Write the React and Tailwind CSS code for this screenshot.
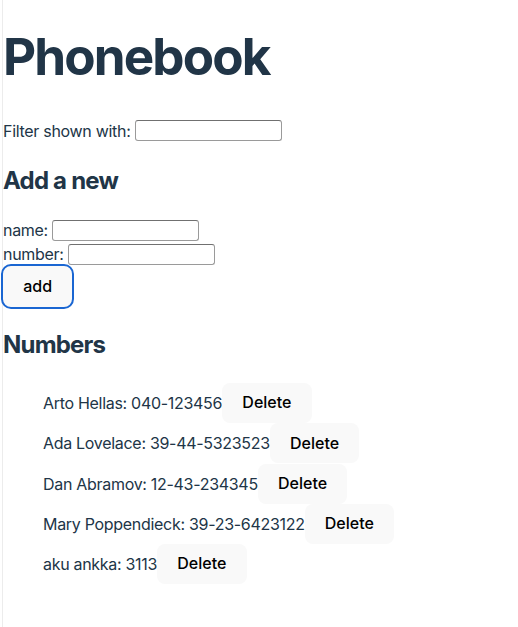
import React from "react";

const persons = [
  { name: "Arto Hellas", number: "040-123456" },
  { name: "Ada Lovelace", number: "39-44-5323523" },
  { name: "Dan Abramov", number: "12-43-234345" },
  { name: "Mary Poppendieck", number: "39-23-6423122" },
  { name: "aku ankka", number: "3113" },
];

function Field() {
  return (
    <input
      type="text"
      className="box-border h-[21px] w-[147px] rounded-[3px] border border-[#9a9a9a] border-t-[#707070] bg-white px-[2px] text-[13.33px] outline-none"
    />
  );
}

export default function App() {
  return (
    <div
      className="ml-[2px] min-h-[627px] border-l border-[#ececec] bg-white pt-[28px] text-[16px] leading-6 tracking-[-0.3px] text-[#213547] antialiased"
      style={{ fontFamily: "Inter, 'Noto Sans', sans-serif" }}
    >
      <h1 className="mb-[34.3px] text-[51.2px] font-bold leading-[1.1] tracking-[-1.9px]">Phonebook</h1>
      <div className="flex h-6 items-center gap-[4px]">
        <span>Filter shown with:</span>
        <Field />
      </div>
      <h2 className="mt-[19.92px] mb-[19.92px] text-[24px] font-bold leading-9 tracking-[-0.8px]">Add a new</h2>
      <form onSubmit={(e) => e.preventDefault()}>
        <div className="flex h-6 items-center gap-[4px]">
          <span>name:</span>
          <Field />
        </div>
        <div className="flex h-6 items-center gap-[4px]">
          <span>number:</span>
          <Field />
        </div>
        <div>
          <button
            type="submit"
            className="h-[40.6px] rounded-lg border border-transparent bg-[#f9f9f9] px-[19.2px] text-[16px] font-medium leading-[19.4px] tracking-normal text-black outline-2 outline-solid outline-[#1a66d2]"
          >
            add
          </button>
        </div>
      </form>
      <h2 className="mt-[19.92px] mb-[19.92px] text-[24px] font-bold leading-9 tracking-[-0.8px]">Numbers</h2>
      <ul className="pl-10">
        {persons.map((p) => (
          <li key={p.name} className="flex h-[40.3px] items-center">
            <span>
              {p.name}: {p.number}
            </span>
            <button className="h-[40px] rounded-lg border border-transparent bg-[#f9f9f9] px-[19.2px] text-[16px] font-medium leading-[19.4px] tracking-normal text-black">
              Delete
            </button>
          </li>
        ))}
      </ul>
    </div>
  );
}
